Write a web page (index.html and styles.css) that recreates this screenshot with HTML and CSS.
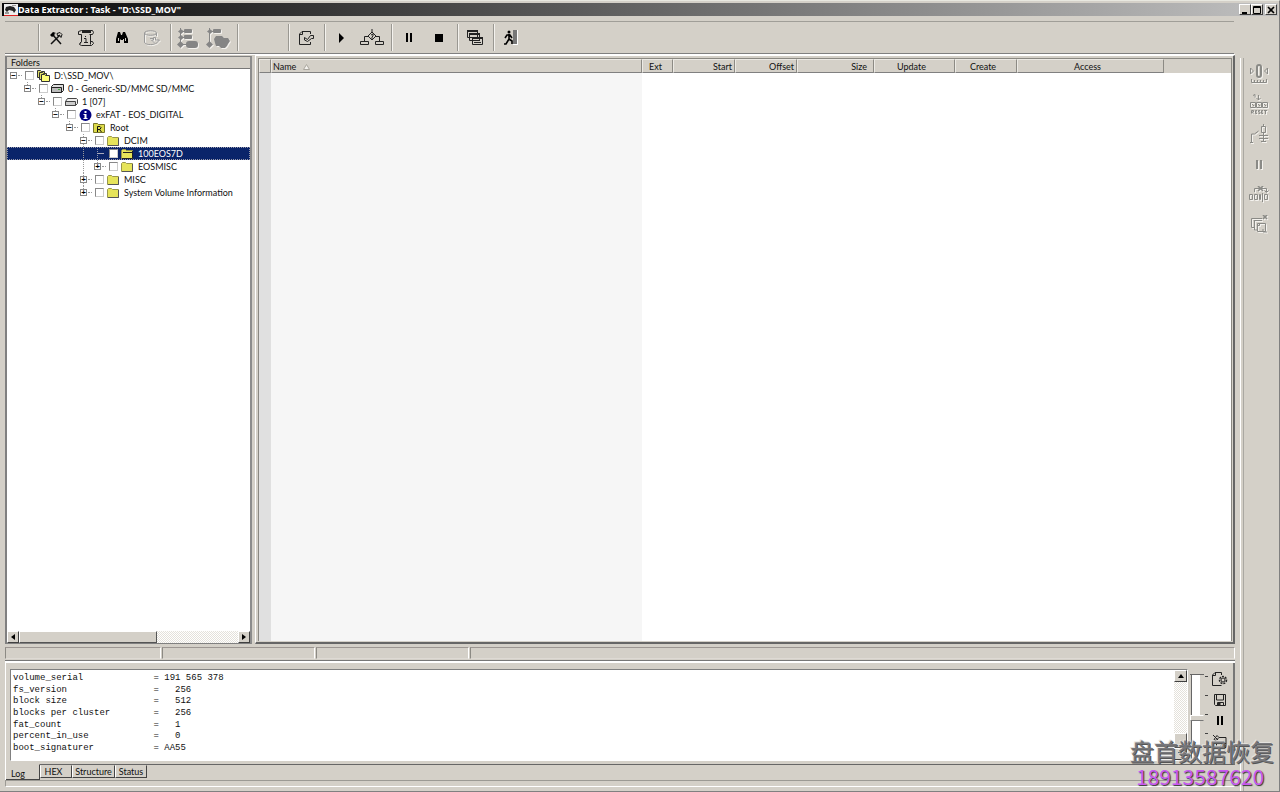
FILE: index.html
```html
<!DOCTYPE html>
<html lang="en">
<head>
<meta charset="utf-8">
<title>Data Extractor</title>
<link rel="stylesheet" href="styles.css">
</head>
<body>
<div class="window">
  <header class="titlebar">
    <svg class="app-icon" width="14" height="12" viewBox="0 0 14 12"><path fill="#eee" d="M0 0h14v12H0z"/><path fill="#222" d="M2 3l4-1 4 1 2 3-2 3-1-2-4-1-2 2-2-2z"/><path fill="#999" d="M1 8h4v2H1zM8 1h4v1H8z"/><path fill="#d22" d="M0 11h14v1H0z"/></svg>
    <h1 class="title">Data Extractor : Task - "D:\SSD_MOV"</h1>
    <div class="window-buttons">
      <button class="win-btn" aria-label="Minimize"><svg width="8" height="8"><path d="M1 6h5v2H1z"/></svg></button>
      <button class="win-btn" aria-label="Maximize"><svg width="8" height="8"><path fill="none" stroke="#000" d="M.5 .5h7v7h-7zM0 1.5h8"/></svg></button>
      <button class="win-btn win-close" aria-label="Close"><svg width="8" height="8"><path stroke="#000" stroke-width="1.6" d="M1 1l6 6M7 1L1 7"/></svg></button>
    </div>
  </header>

  <div class="toolbar" role="toolbar" aria-label="Main">
    <div class="tool-start"></div>
    <div class="tool-group">
      <button class="tool" aria-label="Settings"><svg width="14" height="14" viewBox="0 0 14 14"><path fill="none" stroke="#111" stroke-width="1.5" d="M3 3l9 10M11 4L2 13"/><path d="M1 4l3-3 3 1-2 1 1 1-3 2z"/><path fill="none" stroke="#111" d="M8 2.500l3-1 2 2-1 3-1.500-2-2 0z"/></svg></button>
      <button class="tool" aria-label="Task information"><svg width="18" height="18" viewBox="0 0 18 18" fill="none" stroke="#222"><path d="M4.500 1.500h11l1 2-1 2h-3M4.500 1.500l-3 1v3h3M4.500 5.500v7l-2 3 2 1h10l2-2-1-2-2 0M4.500 12.500l-2 2M13.500 5.500v10"/><path stroke-width="2" d="M5 3h9"/><path d="M8.500 7v1M7 9.500h2v4M7 13.500h4"/></svg></button>
    </div>
    <div class="tool-group">
      <button class="tool" aria-label="Find"><svg width="14" height="14" viewBox="0 0 14 14"><path d="M3 1h2l1 3h1l1-3h2l3 7v4H9V8H8v1H6V8L5 9v3H1V8z"/><path fill="#d4d0c8" d="M3 7h1v3H3zM10 7h1v3h-1z"/></svg></button>
      <button class="tool disabled" aria-label="Load map" disabled><svg width="18" height="16" viewBox="0 0 18 16" fill="none" stroke="#999"><path d="M1.500 3c0-3 12-3 12 0s-12 3-12 0v9c0 3 8 3 10 2M13.500 3v3"/><path d="M7 8.500h3M10.500 7.500h2v2.500h4l-4 4-4-4h2z"/></svg></button>
    </div>
    <div class="tool-group wide">
      <button class="tool disabled" aria-label="Expand tree" disabled><svg width="22" height="22" viewBox="0 0 22 22"><path fill="none" stroke="#858585" d="M3.500 1v18M3 4.500h5M3 10.500h5M3 17.500h8"/><g fill="#858585"><path d="M4 2l3 2.500L4 7 1 4.500zM4 8l3 2.500L4 13l-3-2.500zM0 17.500l3.500-3.500L7 17.500 3.500 21z"/><rect x="7" y="2" width="8" height="4" rx="1"/><rect x="7" y="8" width="8" height="4" rx="1"/><rect x="9" y="14" width="12" height="7" rx="3"/></g></svg></button>
      <button class="tool disabled" aria-label="Expand branch" disabled><svg width="24" height="22" viewBox="0 0 24 22"><path fill="none" stroke="#858585" d="M3.500 1v18M3 4.500h5"/><g fill="#858585"><path d="M4 2l3 2.500L4 7 1 4.500z"/><rect x="7" y="2" width="8" height="4" rx="1"/><path d="M0 17.500l3.500-3.500L7 17.500 3.500 21z"/><path d="M10 9h6l2 2h4l2 3-2 3-1 2-2 2h-4l-2-2h-3l-1-3-1-4z"/></g></svg></button>
    </div>
    <div class="tool-group tool-blank"></div>
    <div class="tool-group">
      <button class="tool" aria-label="Save task"><svg width="17" height="16" viewBox="0 0 17 16" fill="none" stroke="#222"><path d="M12.500 4V1.500H4L1.500 4v10.500h11V12M4.500 1.500v3H1.500"/><path d="M6.500 7.500l3 2 3-4h3v3l-2 0-4 3-3-1.500z"/></svg></button>
    </div>
    <div class="tool-group wide">
      <button class="tool" aria-label="Start"><svg width="6" height="10"><path d="M0 0l5 5-5 5z"/></svg></button>
      <button class="tool" aria-label="Script"><svg width="24" height="18" viewBox="0 0 24 18" fill="none" stroke="#222"><path d="M12 0v3M12 3l4 4-4 4-4-4zM8 7.500H4.500V12M16 7.500h3.500V12M.5 12.500h8v3h-8zM15.500 12.500h8v3h-8z"/><path d="M11 6l2-1v2l-1 1v2"/></svg></button>
    </div>
    <div class="tool-group">
      <button class="tool" aria-label="Pause"><svg width="6" height="9"><path d="M0 0h2v9H0zM4 0h2v9H4z"/></svg></button>
      <button class="tool" aria-label="Stop"><svg width="8" height="8"><path d="M0 0h8v8H0z"/></svg></button>
    </div>
    <div class="tool-group">
      <button class="tool" aria-label="Windows"><svg width="16" height="17" viewBox="0 0 16 17" fill="#d4d0c8" stroke="#222"><path d="M.5 1.500h10v7H.5zM2.500 4.500h10v7h-10zM5.500 8.500h10v7h-10z"/><path stroke-width="2" d="M0 2h11M2 5h11M5 9h11"/><path d="M7 11.500h6M7 13.500h7"/></svg></button>
    </div>
    <div class="tool-group">
      <button class="tool" aria-label="Exit"><svg width="15" height="15" viewBox="0 0 15 15"><circle cx="5" cy="2" r="1.500"/><path fill="none" stroke="#000" stroke-width="1.600" d="M5 4v5l3 2v3M5 9l-3 5H0M1 8l2-3h3l2 3"/><path fill="#777" d="M9 0h4v14H9z"/><path fill="#fff" d="M13 0h1v15H9v-1h4z"/></svg></button>
    </div>
  </div>

  <div class="body">
    <main class="main">
      <div class="work">
        <section class="folders">
          <h2 class="folders-head">Folders</h2>
          <ul class="tree" role="tree" aria-label="Folders">
            <li class="row" role="treeitem"><button class="exp first" aria-label="Collapse">−</button><input type="checkbox" id="f0"><label for="f0"><svg width="13" height="12" viewBox="0 0 13 12" stroke="#333"><path fill="#dd6" d="M.5 .5h3l1 1h3v6h-7z"/><path fill="#dd6" d="M2.500 2.500h3l1 1h3v6h-7z"/><path fill="#ff7" d="M4.500 4.500h3l1 1h4v6h-8z"/></svg>D:\SSD_MOV\</label></li>
            <li class="row" role="treeitem"><i class="gap"></i><button class="exp" aria-label="Collapse">−</button><input type="checkbox" id="f1"><label for="f1"><svg width="13" height="12" viewBox="0 0 13 12" stroke="#222"><path fill="#ddd" d="M.5 3.500l2-2h10v6l-2 2H.5z"/><path fill="#bbb" d="M.5 4.500h10v5H.5z"/><path stroke="#4a4" d="M7 6.500h2"/></svg>0 - Generic-SD/MMC SD/MMC</label></li>
            <li class="row" role="treeitem"><i class="gap"></i><i class="gap"></i><button class="exp" aria-label="Collapse">−</button><input type="checkbox" id="f2"><label for="f2"><svg width="13" height="12" viewBox="0 0 13 12" stroke="#444"><path fill="#eee" d="M.5 5.500l2-3h9l1 1v4l-2 2H.5z"/><path fill="#ccc" d="M.5 5.500h10v4H.5z"/></svg>1 [07]</label></li>
            <li class="row" role="treeitem"><i class="gap"></i><i class="gap"></i><i class="gap"></i><button class="exp" aria-label="Collapse">−</button><input type="checkbox" id="f3"><label for="f3"><svg width="13" height="12" viewBox="0 0 13 12"><circle cx="6.500" cy="6" r="6" fill="#000080"/><path fill="#fff" d="M5.500 2h2v2h-2zM4.500 5h3v4h1v1h-4V9h1V6h-1z"/></svg>exFAT - EOS_DIGITAL</label></li>
            <li class="row" role="treeitem"><i class="gap"></i><i class="gap"></i><i class="gap"></i><i class="gap"></i><button class="exp" aria-label="Collapse">−</button><input type="checkbox" id="f4"><label for="f4"><svg width="13" height="12" viewBox="0 0 13 12"><path fill="#dddb4a" stroke="#77752a" d="M.5 1.500h4l1 1h6v8H.5z"/><path fill="none" stroke="#111" d="M4.500 10V4.500H7l1 1-1 2H4.500M6.500 7.500l2 2.500"/></svg>Root</label></li>
            <li class="row" role="treeitem"><i class="gap"></i><i class="gap"></i><i class="gap"></i><i class="gap"></i><i class="gap"></i><button class="exp more" aria-label="Collapse">−</button><input type="checkbox" id="f5"><label for="f5"><svg width="13" height="12" viewBox="0 0 13 12"><path fill="#e6e45a" stroke="#99974a" d="M.5 2.500l1-1h3l1 1h6v8H.5z"/><path fill="none" stroke="#555" d="M1 10.500h10.500V3"/></svg>DCIM</label></li>
            <li class="row selected" role="treeitem" aria-selected="true"><i class="gap"></i><i class="gap"></i><i class="gap"></i><i class="gap"></i><i class="gap"></i><i class="gap line"></i><i class="leaf"></i><input type="checkbox" id="f6"><label for="f6"><svg width="13" height="12" viewBox="0 0 13 12"><path fill="#e6e45a" stroke="#99974a" d="M.5 2.500l1-1h3l1 1h6v8H.5z"/><path fill="none" stroke="#222" d="M2 4.500h9M1 10.500h10.500V3"/></svg>100EOS7D</label></li>
            <li class="row" role="treeitem"><i class="gap"></i><i class="gap"></i><i class="gap"></i><i class="gap"></i><i class="gap"></i><i class="gap line"></i><button class="exp" aria-label="Expand">+</button><input type="checkbox" id="f7"><label for="f7"><svg width="13" height="12" viewBox="0 0 13 12"><path fill="#e6e45a" stroke="#99974a" d="M.5 2.500l1-1h3l1 1h6v8H.5z"/><path fill="none" stroke="#555" d="M1 10.500h10.500V3"/></svg>EOSMISC</label></li>
            <li class="row" role="treeitem"><i class="gap"></i><i class="gap"></i><i class="gap"></i><i class="gap"></i><i class="gap"></i><button class="exp more" aria-label="Expand">+</button><input type="checkbox" id="f8"><label for="f8"><svg width="13" height="12" viewBox="0 0 13 12"><path fill="#e6e45a" stroke="#99974a" d="M.5 2.500l1-1h3l1 1h6v8H.5z"/><path fill="none" stroke="#555" d="M1 10.500h10.500V3"/></svg>MISC</label></li>
            <li class="row" role="treeitem"><i class="gap"></i><i class="gap"></i><i class="gap"></i><i class="gap"></i><i class="gap"></i><button class="exp" aria-label="Expand">+</button><input type="checkbox" id="f9"><label for="f9"><svg width="13" height="12" viewBox="0 0 13 12"><path fill="#e6e45a" stroke="#99974a" d="M.5 2.500l1-1h3l1 1h6v8H.5z"/><path fill="none" stroke="#555" d="M1 10.500h10.500V3"/></svg>System Volume Information</label></li>
          </ul>
          <div class="hscroll">
            <button class="sbtn" aria-label="Scroll left"><svg width="4" height="6"><path d="M4 0v6L0 3z"/></svg></button>
            <div class="hthumb"></div>
            <button class="sbtn" aria-label="Scroll right"><svg width="4" height="6"><path d="M0 0v6l4-3z"/></svg></button>
          </div>
        </section>

        <section class="files">
          <table class="list">
            <colgroup><col class="c-gutter"><col class="c-name"><col class="c-ext"><col class="c-start"><col class="c-start"><col class="c-size"><col class="c-update"><col class="c-start"><col class="c-access"><col></colgroup>
            <thead><tr>
              <th></th>
              <th class="left">Name <svg class="sort" width="7" height="6"><path fill="#f4f2ee" stroke="#aaa79f" d="M3.500 .5L.5 5.500h6z"/></svg></th>
              <th class="left ext">Ext</th><th class="right">Start</th><th class="right">Offset</th><th class="right size">Size</th><th class="upd">Update</th><th class="cre">Create</th><th class="acc">Access</th><th class="rest"></th>
            </tr></thead>
            <tbody><tr><td class="gutter"></td><td class="name"></td><td></td><td></td><td></td><td></td><td></td><td></td><td></td><td></td></tr></tbody>
          </table>
        </section>
      </div>

      <div class="status"><span></span><span></span><span></span><span></span></div>

      <section class="bottom">
        <div class="log-row">
          <div class="log-box">
            <div class="log" role="log">
              <div>volume_serial             = 191 565 378</div>
              <div>fs_version                =   256</div>
              <div>block size                =   512</div>
              <div>blocks per cluster        =   256</div>
              <div>fat_count                 =   1</div>
              <div>percent_in_use            =   0</div>
              <div>boot_signaturer           = AA55</div>
            </div>
            <div class="vscroll">
              <button class="sbtn" aria-label="Scroll up"><svg width="6" height="4"><path d="M0 4h6L3 0z"/></svg></button>
              <div class="vthumb"></div>
              <button class="sbtn" aria-label="Scroll down"><svg width="6" height="4"><path d="M0 0h6L3 4z"/></svg></button>
            </div>
          </div>
          <input class="level" type="range" aria-label="Log level" min="0" max="100" value="50">
          <div class="ticks"><i></i><i></i><i></i><i></i></div>
          <div class="log-tools">
            <button class="log-tool" aria-label="Log settings"><svg width="17" height="16" viewBox="0 0 17 16" fill="none" stroke="#222"><path d="M10.500 4V1.500H4L1.500 4v10.500h9M4.500 1.500v3H1.500"/><circle cx="12" cy="9" r="3.500" stroke-width="1.500" stroke-dasharray="2 1"/><circle cx="12" cy="9" r="2"/></svg></button>
            <button class="log-tool" aria-label="Save log"><svg width="12" height="12" viewBox="0 0 12 12" fill="none" stroke="#222"><path d="M.5 .5h11v11h-10l-1-1zM2.500 1v5h7V1M3.500 11.500v-3h6v3"/><path fill="#222" d="M4 9h2v2H4z"/></svg></button>
            <button class="log-tool" aria-label="Pause log"><svg width="6" height="9"><path d="M0 0h2v9H0zM4 0h2v9H4z"/></svg></button>
            <button class="log-tool" aria-label="Clear log"><svg width="16" height="16" viewBox="0 0 16 16" fill="none" stroke="#222"><path d="M1 1l5 5M2 5.500l3-4 2 2-3 3zM7 3.500h7v10H4.500V8M7 9.500h7"/><path fill="#222" d="M9 11h4v3H9z"/></svg></button>
          </div>
        </div>
        <div class="tabs" role="tablist">
          <button class="tab active" role="tab" aria-selected="true">Log</button><button class="tab hex" role="tab">HEX</button><button class="tab structure" role="tab">Structure</button><button class="tab" role="tab">Status</button>
        </div>
      </section>
      <footer class="foot"></footer>
    </main>

    <aside class="side">
      <button class="side-btn" aria-label="Reset counter"><svg width="20" height="20" viewBox="0 0 20 20" fill="none" stroke="#8a8a86"><rect x="8" y="1" width="4" height="12" rx="2" stroke-width="2"/><path d="M1.500 4v6l3-3zM18.500 4v6l-3-3z"/><path d="M2.500 15v3.500h15V15M5.500 16v2M8.500 16v2M11.500 16v2M14.500 16v2"/></svg></button>
      <button class="side-btn" aria-label="Reset"><svg width="18" height="22" viewBox="0 0 18 22" fill="none" stroke="#8a8a86"><path d="M3 2.500l2-1v3M8.500 2v5M6.500 5l2 2 2-2M.5 9.500h5v5h-5zM6.500 9.500h5v5h-5zM12.500 9.500h5v5h-5zM2 11l2 2M8 11l2 2M14 11l2 2"/><path d="M1.500 20.500v-3h2v1.500h-2l2 1.500M7 17.500H5.500v3H7M5.500 19H7M10 17.500H8.500V19H10v1.500H8.500M13 17.500h-1.500v3H13M11.500 19H13M14 17.500h3M15.500 17.500v3.500"/></svg></button>
      <button class="side-btn" aria-label="Power"><svg width="20" height="20" viewBox="0 0 20 20" fill="none" stroke="#8a8a86"><path d="M1 18.500h3M2.500 18v-8h3l4-3M14.500 0v2M12.500 2.500h4v6h-4zM14.500 9v9M10 11.500h9M10 14.500h9M12 17.500h5"/></svg></button>
      <button class="side-btn" aria-label="Pause device"><svg width="6" height="9" fill="#8a8a86"><path d="M0 0h2v9H0zM4 0h2v9H4z"/></svg></button>
      <button class="side-btn" aria-label="Skip sectors"><svg width="20" height="16" viewBox="0 0 20 16" fill="none" stroke="#8a8a86"><path d="M.5 8.500h3v5h-3zM5.500 8.500h3v5h-3zM10.500 8.500h1v5h-1zM15.500 8.500h3v5h-3zM5.500 6V2.500h12V6M15.500 4.500l2 2 2-2M13.500 7v9"/><path stroke-width="1.600" d="M9 0l5 5M14 0L9 5"/></svg></button>
      <button class="side-btn" aria-label="Cancel copy"><svg width="18" height="18" viewBox="0 0 18 18" fill="none" stroke="#8a8a86"><path d="M12 3.500H1.500v9H4M4 6V5.500h8M4.500 6v9H7M7.500 8.500h8v8h-8zM7.500 10.500h2v-2M13 14v3h4"/><path stroke-width="1.600" d="M13 0l4 4M17 0l-4 4"/></svg></button>
    </aside>
  </div>
  <div class="watermark"><span lang="zh">盘首数据恢复</span><span class="phone">18913587620</span></div>
</div>
</body>
</html>
```
FILE: styles.css
```css
* { box-sizing: border-box; }
body {
  margin: 0;
  background: #d4d0c8;
  color: #111;
  font: 9px/13px Lato, "Liberation Sans", sans-serif;
}
button {
  margin: 0;
  padding: 0;
  border: 0;
  background: #d4d0c8;
  color: inherit;
  font: inherit;
  display: flex;
  align-items: center;
  justify-content: center;
}
h1, h2, ul { margin: 0; padding: 0; font-size: inherit; }
svg { display: block; flex: none; }
.window {
  position: relative;
  display: flex;
  flex-direction: column;
  height: 100vh;
  padding: 2px 1px 0 2px;
  border-right: 1px solid #808080;
  border-bottom: 1px solid #808080;
  border-top: 1px solid #e8e8e0;
}

/* title bar */
.titlebar {
  display: flex;
  align-items: center;
  height: 13px;
  padding: 0 1px 0 2px;
  background: linear-gradient(90deg, #080808, #c0c0c0);
  color: #fff;
}
.title { flex: 1; font: bold 9px/13px "Noto Sans", sans-serif; }
.window-buttons { display: flex; }
.win-btn, .sbtn {
  width: 12px;
  height: 11px;
  border: 1px solid;
  border-color: #fff #404040 #404040 #fff;
}
.win-close { margin-left: 2px; }

/* toolbar */
.toolbar {
  display: flex;
  align-items: center;
  margin: 5px 44px 0 3px;
  height: 33px;
  border-top: 1px solid #a09e98;
  border-bottom: 1px solid #808080;
}
.tool-start { width: 33px; }
.tool-group {
  display: flex;
  height: 27px;
  padding: 0 3px 0 2px;
  border-left: 1px solid #9a9892;
  box-shadow: inset 1px 0 #f4f2ee;
}
.wide { padding-right: 4px; }
.tool-blank { width: 51px; }
.tool { width: 30px; height: 27px; background: transparent; }
.disabled svg, .side-btn svg { filter: drop-shadow(1px 1px 0 #f4f2ee); }

/* main layout */
.body { display: flex; flex: 1; min-height: 0; }
.main { display: flex; flex-direction: column; flex: 1; min-width: 0; padding-left: 3px; }
.work { display: flex; flex: 1; min-height: 0; gap: 3px; border-top: 1px solid #fff; }

/* folder tree */
.folders {
  display: flex;
  flex-direction: column;
  width: 247px;
  margin-top: 1px;
  border: 1px solid #808080;
  border-left-width: 2px;
  border-right: 2px solid #8c8c8c;
  background: #fff;
}
.folders-head {
  height: 12px;
  padding-left: 4px;
  border-bottom: 1px solid #777;
  background: #d4d0c8;
  font-weight: normal;
  line-height: 12px;
}
.tree { flex: 1; list-style: none; overflow: hidden; }
.row { display: flex; align-items: center; height: 13px; white-space: nowrap; }
.row label { display: flex; align-items: center; gap: 4px; }
.row input {
  appearance: none;
  width: 9px;
  height: 9px;
  margin: 0 3px 0 5px;
  border: 1px solid;
  border-color: #888 #ccc #ccc #888;
  background: #fff;
}
.gap, .leaf { flex: none; width: 14px; height: 13px; }
.leaf { width: 13px; }
.line { background: repeating-linear-gradient(#999 0 1px, transparent 1px 2px) 6px 0 / 1px 13px no-repeat; }
.exp {
  position: relative;
  flex: none;
  width: 7px;
  height: 7px;
  margin: 0 3px;
  border: 1px solid #888;
  background: #fff;
  color: #000;
  font: bold 8px/5px "Liberation Sans", sans-serif;
}
.exp::before {
  content: "";
  position: absolute;
  left: 2px;
  top: -4px;
  height: 3px;
  border-left: 1px dotted #999;
}
.exp.first::before { display: none; }
.exp.more::before { height: 13px; clip-path: polygon(0 0, 100% 0, 100% 3px, 0 3px, 0 10px, 100% 10px, 100% 100%, 0 100%); }
.exp::after {
  content: "";
  position: absolute;
  left: 7px;
  top: 2px;
  width: 4px;
  border-top: 1px dotted #999;
}
.leaf {
  background:
    linear-gradient(#aab, #aab) 6px 6px / 7px 1px no-repeat,
    repeating-linear-gradient(#99a 0 1px, transparent 1px 2px) 6px 0 / 1px 13px no-repeat;
}
.selected { background: #0a246a; color: #fff; outline: 1px dotted #99a; outline-offset: -1px; }

/* scroll bars */
.hscroll, .vscroll { display: flex; background: repeating-conic-gradient(#fff 0 25%, #e4e1da 0 50%) 0 0 / 2px 2px; }
.hscroll { height: 12px; justify-content: space-between; }
.hscroll .sbtn { height: 12px; }
.hthumb {
  width: 138px;
  margin-right: auto;
  border: 1px solid;
  border-color: #fff #555 #555 #fff;
  background: #d4d0c8;
}
.vscroll { flex-direction: column; width: 13px; }
.vscroll .sbtn { width: 13px; height: 12px; }
.vthumb { height: 15px; margin-top: auto; border: 1px solid; border-color: #fff #555 #555 #fff; background: #d4d0c8; }

/* file list */
.files {
  flex: 1;
  min-width: 0;
  padding: 2px 1px 1px 2px;
  border: 1px solid #fff;
  border-right: 2px solid #666;
  border-bottom: 2px solid #666;
}
.list {
  width: 100%;
  height: 100%;
  table-layout: fixed;
  border-collapse: separate;
  border-spacing: 0;
  border: 1px solid #8a8882;
  border-bottom: 0;
  background: #fff;
}
.list th {
  height: 14px;
  padding: 2px 2px 0;
  border: 1px solid;
  border-color: #eceae5 #8c8a84 #808080 #eceae5;
  background: #d4d0c8;
  font-weight: normal;
  line-height: 10px;
  text-align: center;
}
.list .rest { border-color: transparent; }
.list .left { text-align: left; padding-left: 1px; }
.list .right { text-align: right; }
.list .ext { padding-left: 6px; }
.list .size { padding-right: 6px; }
.list .upd, .list .cre, .list .acc { padding-right: 8px; }
.list td { padding: 0; }
.sort { display: inline-block; margin-left: 4px; }
.gutter { background: #e0e0e0; }
.name { background: #f6f6f6; }
.c-gutter { width: 12px; }
.c-name { width: 371px; }
.c-ext { width: 31px; }
.c-start { width: 62px; }
.c-size { width: 77px; }
.c-update { width: 81px; }
.c-access { width: 147px; }

/* status strip */
.status { display: flex; gap: 1px; height: 17px; padding: 3px 0 1px; border-bottom: 1px solid #777; }
.status span { width: 153px; border: 1px solid; border-color: #9c9692 #fff #dedad4 #8c8a84; }
.status span:first-child { width: 156px; }
.status span:last-child { flex: 1; width: auto; }

/* log panel */
.bottom { border-top: 2px solid #fff; border-left: 1px solid #fff; }
.log-row {
  display: flex;
  height: 102px;
  padding: 6px 5px 3px 4px;
  border-right: 2px solid #777;
  border-bottom: 1px solid #666;
}
.log-box { display: flex; flex: 1; border: 1px solid; border-color: #808080 #fff #fff #808080; background: #fff; }
.log {
  flex: 1;
  display: grid;
  grid-auto-rows: 1fr;
  align-items: center;
  height: 81px;
  padding: 0 2px;
  margin-top: 3px;
  color: #111;
  font: 9px/11px "Liberation Mono", "Courier New", monospace;
  white-space: pre;
}
.level {
  appearance: none;
  writing-mode: vertical-lr;
  width: 14px;
  height: 86px;
  margin: 5px 0 0 2px;
  background: linear-gradient(90deg, #666 0 1px, #fff 1px 9px, #d4d0c8 9px) 1px 0 / 10px 100% no-repeat;
  border-top: 1px solid #666;
}
.level::-webkit-slider-thumb {
  appearance: none;
  width: 14px;
  height: 6px;
  border: 1px solid;
  border-color: #fff #d4d0c8 #777 #fff;
  background: #d4d0c8;
}
.ticks { display: flex; flex-direction: column; gap: 18px; padding: 7px 0 0 1px; }
.ticks i { width: 3px; height: 1px; background: #444; }
.log-tools { display: flex; flex-direction: column; margin: -1px 0 0 3px; }
.log-tool { width: 17px; height: 21px; }

/* tabs */
.tabs { display: flex; align-items: flex-start; height: 15px; }
.tab { width: 32px; height: 13px; border: 1px solid; border-color: transparent #444 #444 #fff; }
.tab.active { width: 34px; height: 16px; margin-top: -1px; padding: 2px 9px 0 0; border-left: 0; }
.hex { padding-right: 5px; }
.structure { width: 43px; }
.foot { height: 7px; margin-bottom: 4px; border: 1px solid; border-color: #9c9a94 #d4d0c8 #fff #9c9a94; }

/* device sidebar */
.side { display: flex; flex-direction: column; width: 43px; margin-top: 3px; padding: 2px 0 0 5px; }
.side::before {
  content: "";
  position: absolute;
  width: 2px;
  top: 57px;
  bottom: 0;
  border-left: 1px solid #fff;
  border-right: 1px solid #aaa8a2;
}
.side-btn { width: 38px; height: 30px; background: transparent; }

/* corner stamp */
.watermark {
  position: absolute;
  right: 5px;
  bottom: 3px;
  display: flex;
  flex-direction: column;
  align-items: center;
  color: #77777b;
  font: 24px/27px "Noto Sans CJK SC", sans-serif;
  text-shadow: 1px 1px 0 #555, -1px -1px 0 #e4e2de;
  pointer-events: none;
}
.phone {
  margin-right: 4px;
  color: #c858f0;
  font-size: 21px;
  line-height: 24px;
  text-shadow: 1px 1px 1px #333;
}
```
